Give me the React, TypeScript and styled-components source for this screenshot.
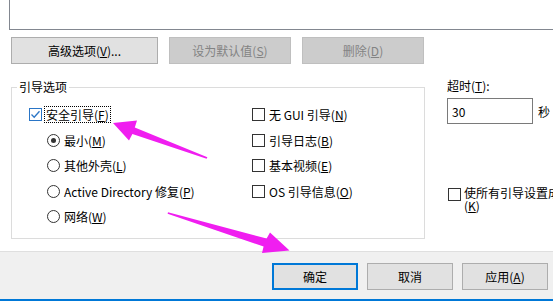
import React from 'react';
import styled, { createGlobalStyle } from 'styled-components';

const Global = createGlobalStyle`
  html, body { margin: 0; padding: 0; background: #fff; }
  body {
    font-family: "Noto Sans CJK SC", "Noto Sans", sans-serif;
    font-size: 12px;
    color: #000;
  }
  * { box-sizing: border-box; }
`;

const Page = styled.div`
  position: relative;
  width: 553px;
  height: 301px;
  overflow: hidden;
  display: flex;
  flex-direction: column;
  background: #fff;
`;

const TabBody = styled.div`
  height: 251px;
  flex: none;
  display: flex;
  flex-direction: column;
`;

const ListBox = styled.div`
  height: 30px;
  margin-left: 9px;
  border-left: 1px solid #828790;
  border-bottom: 1px solid #828790;
  flex: none;
`;

const ButtonRow = styled.div`
  display: flex;
  gap: 11px;
  margin-top: 7px;
  padding-left: 11px;
`;

const Btn = styled.button<{ $w: number; $default?: boolean }>`
  width: ${p => p.$w}px;
  height: 27px;
  padding: 0;
  font: inherit;
  font-size: 12px;
  line-height: 14px;
  color: #000;
  background: #e1e1e1;
  border: ${p => (p.$default ? '2px solid #0078d7' : '1px solid #adadad')};
  border-radius: 0;
  &:disabled {
    background: #cccccc;
    border-color: #bfbfbf;
    color: #838383;
  }
`;

const U = styled.span`
  text-decoration: underline;
  text-underline-offset: 1px;
`;

const Main = styled.div`
  display: flex;
  margin-top: 15px;
  padding-left: 11px;
`;

const GroupBox = styled.fieldset`
  width: 414px;
  height: 160px;
  margin: 0;
  padding: 0;
  min-width: 0;
  border: 1px solid #dcdcdc;
  flex: none;
`;

const Legend = styled.legend`
  margin-left: 5px;
  padding: 0 2px;
  line-height: 16px;
`;

const Options = styled.div`
  display: flex;
  padding: 7px 0 0 17px;
`;

const Column = styled.div<{ $w?: number }>`
  display: flex;
  flex-direction: column;
  width: ${p => (p.$w ? `${p.$w}px` : 'auto')};
`;

const Row = styled.div<{ $indent?: number }>`
  display: flex;
  align-items: center;
  height: 25.5px;
  gap: 3px;
  padding-left: ${p => p.$indent ?? 0}px;
  white-space: nowrap;
`;

const Label = styled.span<{ $focus?: boolean }>`
  line-height: 15px;
  padding: 0 1px;
  outline: ${p => (p.$focus ? '1px dotted #000' : 'none')};
  outline-offset: 0;
`;

const Box = styled.span<{ $checked?: boolean }>`
  width: 13px;
  height: 13px;
  flex: none;
  border: 1px solid ${p => (p.$checked ? '#2a75c6' : '#333')};
  background: #fff;
  display: flex;
  align-items: center;
  justify-content: center;
`;

const Radio = styled.span<{ $on?: boolean }>`
  width: 13px;
  height: 13px;
  flex: none;
  border: 1px solid #333;
  border-radius: 50%;
  background: #fff;
  display: flex;
  align-items: center;
  justify-content: center;
  &::after {
    content: '';
    width: 5px;
    height: 5px;
    border-radius: 50%;
    background: ${p => (p.$on ? '#333' : 'transparent')};
  }
`;

const Side = styled.div`
  flex: none;
  width: 180px;
  margin-left: 22px;
  display: flex;
  flex-direction: column;
`;

const SideLabel = styled.div`
  line-height: 14px;
`;

const InputRow = styled.div`
  display: flex;
  align-items: center;
  gap: 5px;
  margin-top: 5px;
`;

const TextInput = styled.div`
  width: 86px;
  height: 26px;
  border: 1px solid #7a7a7a;
  padding-left: 4px;
  display: flex;
  align-items: center;
  background: #fff;
`;

const PermRow = styled.div`
  display: flex;
  align-items: flex-start;
  gap: 3px;
  margin-top: 64px;
  padding-left: 1px;
`;

const PermText = styled.span`
  width: 165px;
  line-height: 13px;
  margin-top: -2px;
`;

const Footer = styled.div`
  flex: 1;
  background: #f0f0f0;
  border-top: 1px solid #dfdfdf;
  border-bottom: 2px solid #0078d7;
  display: flex;
  justify-content: flex-end;
  align-items: flex-start;
  gap: 9px;
  padding: 11px 5px 0 0;
`;

const Overlay = styled.svg`
  position: absolute;
  left: 0;
  top: 0;
  pointer-events: none;
`;

const Check = () => (
  <svg width="11" height="11" viewBox="0 0 11 11">
    <path d="M1.5 5.5 L4.2 8.2 L9.5 2.2" fill="none" stroke="#2a75c6" strokeWidth="1.3" />
  </svg>
);

const CheckRow: React.FC<{ checked?: boolean; focus?: boolean; children: React.ReactNode }> = ({ checked, focus, children }) => (
  <Row>
    <Box $checked={checked}>{checked && <Check />}</Box>
    <Label $focus={focus}>{children}</Label>
  </Row>
);

const RadioRow: React.FC<{ on?: boolean; children: React.ReactNode }> = ({ on, children }) => (
  <Row $indent={18}>
    <Radio $on={on} />
    <Label>{children}</Label>
  </Row>
);

export default function App() {
  return (
    <>
      <Global />
      <Page>
        <TabBody>
          <ListBox />
          <ButtonRow>
            <Btn $w={147}>高级选项(<U>V</U>)...</Btn>
            <Btn $w={122} disabled>设为默认值(<U>S</U>)</Btn>
            <Btn $w={122} disabled>删除(<U>D</U>)</Btn>
          </ButtonRow>
          <Main>
            <GroupBox>
              <Legend>引导选项</Legend>
              <Options>
                <Column $w={223}>
                  <CheckRow checked focus>安全引导(<U>F</U>)</CheckRow>
                  <RadioRow on>最小(<U>M</U>)</RadioRow>
                  <RadioRow>其他外壳(<U>L</U>)</RadioRow>
                  <RadioRow>Active Directory 修复(<U>P</U>)</RadioRow>
                  <RadioRow>网络(<U>W</U>)</RadioRow>
                </Column>
                <Column>
                  <CheckRow>无 GUI 引导(<U>N</U>)</CheckRow>
                  <CheckRow>引导日志(<U>B</U>)</CheckRow>
                  <CheckRow>基本视频(<U>E</U>)</CheckRow>
                  <CheckRow>OS 引导信息(<U>O</U>)</CheckRow>
                </Column>
              </Options>
            </GroupBox>
            <Side>
              <SideLabel>超时(<U>T</U>):</SideLabel>
              <InputRow>
                <TextInput>30</TextInput>
                <span>秒</span>
              </InputRow>
              <PermRow>
                <Box />
                <PermText>使所有引导设置成为永久设置(<U>K</U>)</PermText>
              </PermRow>
            </Side>
          </Main>
        </TabBody>
        <Footer>
          <Btn $w={86} $default>确定</Btn>
          <Btn $w={86}>取消</Btn>
          <Btn $w={86}>应用(<U>A</U>)</Btn>
        </Footer>
        <Overlay width="553" height="301" viewBox="0 0 553 301">
          <polygon
            fill="#f01ef0"
            points="113,123 137,120.5 134.8,127.4 207.4,157.2 206.6,158.8 132.4,134 129,140.5"
          />
          <polygon
            fill="#f01ef0"
            points="168,212.2 266.6,238.6 270,232.5 289.5,250.5 262,253 263.6,246.6 167.6,213.8"
          />
        </Overlay>
      </Page>
    </>
  );
}
